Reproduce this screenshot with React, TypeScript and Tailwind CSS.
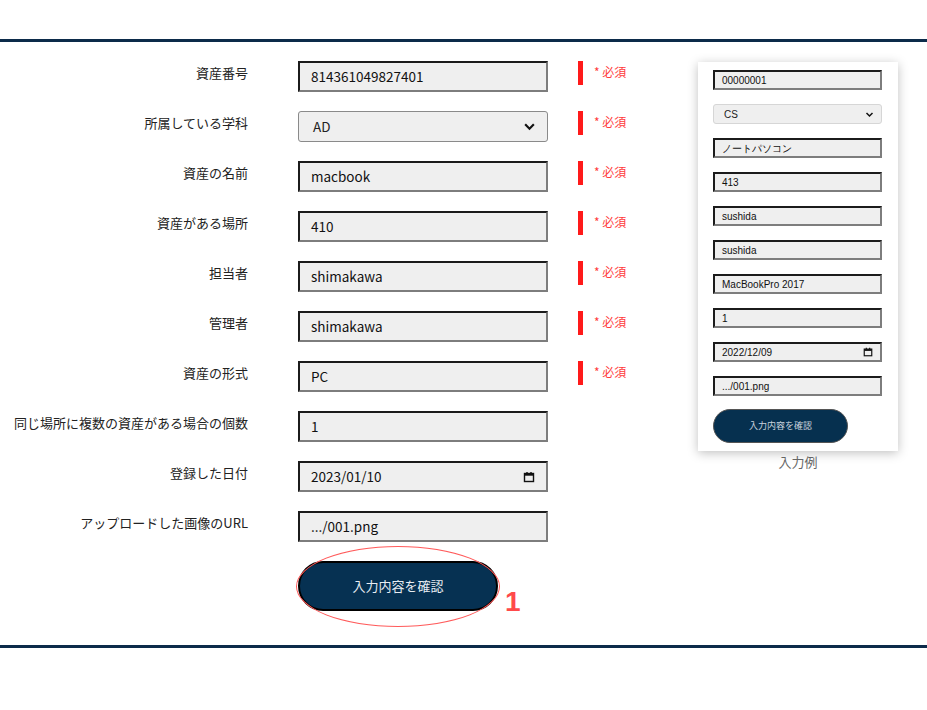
import React from 'react';

const fields = [
  { label: '資産番号', value: '814361049827401', kind: 'text', required: true },
  { label: '所属している学科', value: 'AD', kind: 'select', required: true },
  { label: '資産の名前', value: 'macbook', kind: 'text', required: true },
  { label: '資産がある場所', value: '410', kind: 'text', required: true },
  { label: '担当者', value: 'shimakawa', kind: 'text', required: true },
  { label: '管理者', value: 'shimakawa', kind: 'text', required: true },
  { label: '資産の形式', value: 'PC', kind: 'text', required: true },
  { label: '同じ場所に複数の資産がある場合の個数', value: '1', kind: 'text', required: false },
  { label: '登録した日付', value: '2023/01/10', kind: 'date', required: false },
  { label: 'アップロードした画像のURL', value: '.../001.png', kind: 'text', required: false },
];

const sample = [
  { value: '00000001', kind: 'text' },
  { value: 'CS', kind: 'select' },
  { value: 'ノートパソコン', kind: 'text' },
  { value: '413', kind: 'text' },
  { value: 'sushida', kind: 'text' },
  { value: 'sushida', kind: 'text' },
  { value: 'MacBookPro 2017', kind: 'text' },
  { value: '1', kind: 'text' },
  { value: '2022/12/09', kind: 'date' },
  { value: '.../001.png', kind: 'text' },
];

const Chevron = ({ size = 12 }: { size?: number }) => (
  <svg width={size} height={size} viewBox="0 0 12 12">
    <path d="M2 4l4 4 4-4" fill="none" stroke="#111" strokeWidth="2" />
  </svg>
);

const Calendar = ({ size = 12 }: { size?: number }) => (
  <svg width={size} height={size} viewBox="0 0 12 12">
    <rect x="1.5" y="2.5" width="9" height="8" fill="none" stroke="#111" strokeWidth="1.4" />
    <rect x="1.5" y="2.5" width="9" height="2.2" fill="#111" />
    <path d="M4 1v2M8 1v2" stroke="#111" strokeWidth="1.4" />
  </svg>
);

const Field: React.FC<{ value: string; kind: string; small?: boolean }> = ({ value, kind, small }) => {
  const size = small
    ? 'h-[20px] px-[7px] text-[10px] font-["Liberation_Sans",sans-serif]'
    : 'h-[31px] px-[11px] text-[13.5px]';
  if (kind === 'select') {
    return (
      <div
        className={`flex items-center justify-between bg-[#efefef] border border-[#8a8a8a] rounded-[3px] ${size} ${
          small ? 'border-[#d6d6d6] pl-[10px]' : 'pl-[14px]'
        }`}
      >
        <span>{value}</span>
        <Chevron size={small ? 9 : 13} />
      </div>
    );
  }
  return (
    <div
      className={`flex items-center justify-between bg-[#efefef] border-2 border-t-[#1b1b1b] border-l-[#1b1b1b] border-b-[#7d7d7d] border-r-[#7d7d7d] ${size}`}
    >
      <span className="text-[#111]">{value}</span>
      {kind === 'date' && <Calendar size={small ? 10 : 12} />}
    </div>
  );
};

export default function App() {
  return (
    <div className='w-[927px] h-[710px] bg-white font-["Noto_Sans_CJK_JP","Noto_Sans",sans-serif] text-[#222]'>
      <div className="h-[39px]" />
      <div className="border-t-[3px] border-b-[3px] border-[#0c2b4a] h-[609px] flex">
        <div className="w-[698px] pt-[19px]">
          {fields.map((f) => (
            <div key={f.label} className="flex h-[50px]">
              <div className="w-[248px] text-right text-[13px] pt-[2px] leading-[20px] text-[#222]">{f.label}</div>
              <div className="w-[250px] ml-[50px]">
                <Field value={f.value} kind={f.kind} />
              </div>
              {f.required && (
                <div className="flex ml-[30px]">
                  <div className="w-[5px] h-[24px] bg-[#ff1a1a]" />
                  <span className="ml-[11px] text-[12px] leading-[22px] text-[#ff3b3b]">* 必須</span>
                </div>
              )}
            </div>
          ))}
          <div className="ml-[298px] relative w-[200px] h-[50px]">
            <button className="w-[200px] h-[50px] rounded-full bg-[#063152] border-2 border-black text-[#e8edf2] text-[13px]">
              入力内容を確認
            </button>
            <div className="absolute left-[-2px] top-[-15px] w-[204px] h-[81px] rounded-[50%] border-[1.5px] border-[#ff5a5a] pointer-events-none" />
            <span className='absolute left-[207px] top-[26px] text-[28px] leading-[30px] font-bold text-[#ff4a4a] font-["Liberation_Sans",sans-serif]'>
              1
            </span>
          </div>
        </div>
        <div className="pt-[20px]">
          <div className="w-[200px] bg-white shadow-[0_2px_10px_rgba(0,0,0,0.25)] pt-[8px] pb-[8px] pl-[15px] pr-[16px]">
            {sample.map((s, i) => (
              <div key={i} className="h-[34px]">
                <Field value={s.value} kind={s.kind} small />
              </div>
            ))}
            <button className="mt-[-1px] w-[135px] h-[34px] rounded-full bg-[#06304f] border border-[#555] text-[#c9d3dd] text-[9px]">
              入力内容を確認
            </button>
          </div>
          <div className="w-[200px] text-center text-[13px] text-[#666] mt-[1px]">入力例</div>
        </div>
      </div>
    </div>
  );
}
